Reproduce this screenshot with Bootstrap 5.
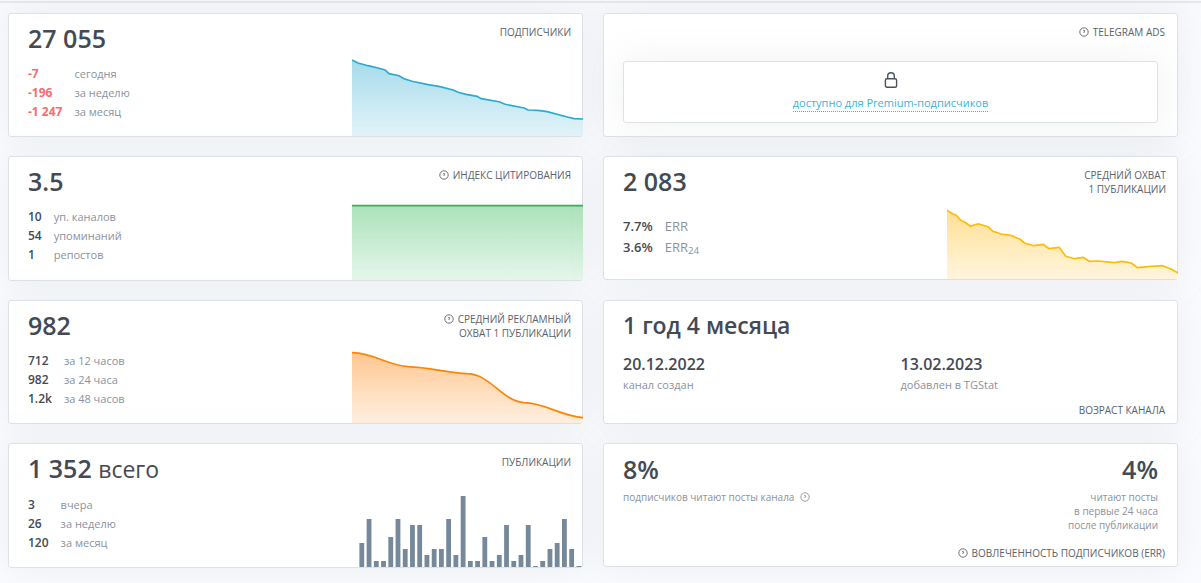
<!DOCTYPE html>
<html lang="ru">
<head>
<meta charset="utf-8">
<meta name="viewport" content="width=device-width, initial-scale=1">
<title>Статистика канала</title>
<link href="https://cdn.jsdelivr.net/npm/bootstrap@5.3.0/dist/css/bootstrap.min.css" rel="stylesheet">
<style>
body{background:#fafbfe;color:#8a929e;font-family:"Open Sans","Noto Sans",sans-serif;font-size:11px;line-height:19px;overflow-x:hidden}
.topline{height:3px;background:#e6e8e9;border-top:1px solid #f8f9fa;box-shadow:0 0 35px rgba(154,161,171,.3)}
.board{padding:10px 23px 15px 8px}
.board .row{--bs-gutter-x:20px;--bs-gutter-y:19px}
.stat{border:1px solid #dee2e6;border-radius:3px;box-shadow:0 0 35px rgba(154,161,171,.15);min-height:124px}
.stat-tall{min-height:125px}
.stat-main{padding:9px 19px 0}
.figure-lg{font-size:25px;line-height:30px;font-weight:600;color:#434a54;margin:0 0 11px}
.figure-words{font-size:23px;margin-bottom:13px}
.figure-err{margin-top:1px;margin-bottom:6px}
.figure-rest{font-size:23px;font-weight:400}
.stat-label{font-size:10px;line-height:14px;color:#5b626b;text-transform:uppercase;text-align:right;padding:11px 12px 0 0}
.stat-label-end{padding:0 12px 6px 0}
.numbers th{font-size:12px;font-weight:600;color:#434a54;padding:0 12px 0 0}
.numbers td{padding:0}
.numbers .down{color:#fb6b6b;font-weight:700}
.numbers-lg{font-size:13px;line-height:21px;margin-top:20px}
.numbers-lg th{font-size:13px}
.chart-col{flex:0 0 231px;flex-basis:calc(40% + 2px);margin-right:-1px}
.chart{display:block;width:100%;height:80px}
.chart .line{fill:none;stroke-width:1.7;vector-effect:non-scaling-stroke}
.help{width:10px;height:10px;vertical-align:-1px;margin-right:4px}
.lockbox{border:1px solid #dee2e6;border-radius:3px;box-shadow:0 0 35px rgba(154,161,171,.15);margin:22px 19px 0;height:62px;padding-top:9px}
.lock{width:14px;height:18px;display:block}
.premium{color:#39b5d8;border-bottom:1px dotted;text-decoration:none;line-height:16px;margin-top:6px}
.date{font-size:16px;line-height:22px;font-weight:600;color:#434a54}
.note{font-size:10px;line-height:14px}
.note .help{margin:0 0 0 3px}
</style>
</head>
<body>
<svg class="d-none" aria-hidden="true">
  <symbol id="help" viewBox="0 0 10 10"><circle cx="5" cy="5" r="4.2" fill="none" stroke="currentColor" stroke-width=".9"/><path d="M4 3.9Q5 3.1 5.8 3.9 5.9 4.5 5 5V6" fill="none" stroke="currentColor" stroke-width=".9"/></symbol>
</svg>
<div class="topline"></div>
<main class="board">
<div class="row align-items-start">
  <div class="col-6">
    <section class="card stat flex-row">
      <div class="stat-main flex-grow-1">
        <h2 class="figure-lg">27 055</h2>
        <table class="numbers">
          <tr><th class="down" scope="row">-7</th><td>сегодня</td></tr>
          <tr><th class="down" scope="row">-196</th><td>за неделю</td></tr>
          <tr><th class="down" scope="row">-1 247</th><td>за месяц</td></tr>
        </table>
      </div>
      <div class="chart-col d-flex flex-column justify-content-between">
        <div class="stat-label">Подписчики</div>
        <svg class="chart" viewBox="0 0 231 80" preserveAspectRatio="none">
          <defs><linearGradient id="gBlue" x2="0" y2="1"><stop stop-color="#a5dbea"/><stop offset="1" stop-color="#e3f4fa"/></linearGradient></defs>
          <path fill="url(#gBlue)" d="M0 4L6 7 16 9.7 26 12 33 14 37 17.7 47 19.7 52 22.7 60 25.3 76 28.7 88 30.7 101 34 106 36.3 114 38.3 125 40.3 129 42.7 147 45.7 153 48.3 172 52 176 54 186 54.3 195 55.7 215 61 222 62.7 231 63V80H0z"/>
          <path class="line" stroke="#2aabd2" d="M0 4L6 7 16 9.7 26 12 33 14 37 17.7 47 19.7 52 22.7 60 25.3 76 28.7 88 30.7 101 34 106 36.3 114 38.3 125 40.3 129 42.7 147 45.7 153 48.3 172 52 176 54 186 54.3 195 55.7 215 61 222 62.7 231 63"/>
        </svg>
      </div>
    </section>
  </div>
  <div class="col-6">
    <section class="card stat">
      <div class="stat-label"><svg class="help"><use href="#help"/></svg>Telegram Ads</div>
      <div class="lockbox d-flex flex-column align-items-center bg-white">
        <svg class="lock" viewBox="0 0 14 18" fill="none" stroke="#4b525b" stroke-width="1.4"><rect x="1.4" y="7.7" width="11.2" height="8.6" rx="1.5"/><path d="M3.7 7.7V5.1C3.7 2.9 5 1.7 7 1.7s3.3 1.2 3.3 3.4v2.6"/></svg>
        <a class="premium" href="#">доступно для Premium-подписчиков</a>
      </div>
    </section>
  </div>

  <div class="col-6">
    <section class="card stat stat-tall flex-row">
      <div class="stat-main flex-grow-1">
        <h2 class="figure-lg">3.5</h2>
        <table class="numbers">
          <tr><th scope="row">10</th><td>уп. каналов</td></tr>
          <tr><th scope="row">54</th><td>упоминаний</td></tr>
          <tr><th scope="row">1</th><td>репостов</td></tr>
        </table>
      </div>
      <div class="chart-col d-flex flex-column justify-content-between">
        <div class="stat-label"><svg class="help"><use href="#help"/></svg>Индекс цитирования</div>
        <svg class="chart" viewBox="0 0 231 80" preserveAspectRatio="none">
          <defs><linearGradient id="gGreen" x2="0" y2="1"><stop stop-color="#ace2ba"/><stop offset="1" stop-color="#e6f7eb"/></linearGradient></defs>
          <path fill="url(#gGreen)" d="M0 5.6H231V80H0z"/>
          <path class="line" stroke="#30b552" d="M0 5.6H231"/>
        </svg>
      </div>
    </section>
  </div>
  <div class="col-6">
    <section class="card stat flex-row">
      <div class="stat-main flex-grow-1">
        <h2 class="figure-lg">2 083</h2>
        <table class="numbers numbers-lg">
          <tr><th scope="row">7.7%</th><td>ERR</td></tr>
          <tr><th scope="row">3.6%</th><td>ERR<sub>24</sub></td></tr>
        </table>
      </div>
      <div class="chart-col d-flex flex-column justify-content-between">
        <div class="stat-label">Средний охват<br>1 публикации</div>
        <svg class="chart" viewBox="0 0 231 80" preserveAspectRatio="none">
          <defs><linearGradient id="gYellow" x2="0" y2="1"><stop stop-color="#ffdf94"/><stop offset="1" stop-color="#fff6de"/></linearGradient></defs>
          <path fill="url(#gYellow)" d="M0 11.3L5.3 14.7 9.3 16.3 13.7 21.3 18 23.3 23.7 27.3 31 24.7 41 27.7 46 32.3 54 35 65 36.7 68 38.3 72.7 40 78 44.3 87 46.7 96 45.3 102 49.7 112 48.3 118.7 57.3 127.3 59.7 136 58.3 142 62.3 151 62 167 63.7 175.3 62.3 184 64 190 68.7 203.7 67.3 215.3 66.7 223.7 70 231 74V80H0z"/>
          <path class="line" stroke="#ffbc00" stroke-linejoin="round" d="M0 11.3L5.3 14.7 9.3 16.3 13.7 21.3 18 23.3 23.7 27.3 31 24.7 41 27.7 46 32.3 54 35 65 36.7 68 38.3 72.7 40 78 44.3 87 46.7 96 45.3 102 49.7 112 48.3 118.7 57.3 127.3 59.7 136 58.3 142 62.3 151 62 167 63.7 175.3 62.3 184 64 190 68.7 203.7 67.3 215.3 66.7 223.7 70 231 74"/>
        </svg>
      </div>
    </section>
  </div>

  <div class="col-6">
    <section class="card stat flex-row">
      <div class="stat-main flex-grow-1">
        <h2 class="figure-lg">982</h2>
        <table class="numbers">
          <tr><th scope="row">712</th><td>за 12 часов</td></tr>
          <tr><th scope="row">982</th><td>за 24 часа</td></tr>
          <tr><th scope="row">1.2k</th><td>за 48 часов</td></tr>
        </table>
      </div>
      <div class="chart-col d-flex flex-column justify-content-between">
        <div class="stat-label"><svg class="help"><use href="#help"/></svg>Средний рекламный<br>охват 1 публикации</div>
        <svg class="chart" viewBox="0 0 231 80" preserveAspectRatio="none">
          <defs><linearGradient id="gOrange" x2="0" y2="1"><stop stop-color="#ffc791"/><stop offset="1" stop-color="#fff0e1"/></linearGradient></defs>
          <path fill="url(#gOrange)" d="M0 9.7C23 10.5 35 22 56 23.7C77 24.5 95 29.5 115 30.7C138 31 150 58 172 59.7C193 60 208 73 231 74.7V80H0z"/>
          <path class="line" stroke="#ff8400" d="M0 9.7C23 10.5 35 22 56 23.7C77 24.5 95 29.5 115 30.7C138 31 150 58 172 59.7C193 60 208 73 231 74.7"/>
        </svg>
      </div>
    </section>
  </div>
  <div class="col-6">
    <section class="card stat">
      <div class="stat-main">
        <h2 class="figure-lg figure-words">1 год 4 месяца</h2>
        <div class="row">
          <div class="col-6"><div class="date">20.12.2022</div>канал создан</div>
          <div class="col-6"><div class="date">13.02.2023</div>добавлен в TGStat</div>
        </div>
      </div>
      <div class="stat-label stat-label-end mt-auto">Возраст канала</div>
    </section>
  </div>

  <div class="col-6">
    <section class="card stat stat-tall flex-row">
      <div class="stat-main flex-grow-1">
        <h2 class="figure-lg">1 352 <span class="figure-rest">всего</span></h2>
        <table class="numbers">
          <tr><th scope="row">3</th><td>вчера</td></tr>
          <tr><th scope="row">26</th><td>за неделю</td></tr>
          <tr><th scope="row">120</th><td>за месяц</td></tr>
        </table>
      </div>
      <div class="chart-col d-flex flex-column justify-content-between">
        <div class="stat-label">Публикации</div>
        <svg class="chart" id="posts" viewBox="0 0 231 80" preserveAspectRatio="none" fill="#75899b"></svg>
      </div>
    </section>
  </div>
  <div class="col-6">
    <section class="card stat">
      <div class="stat-main d-flex justify-content-between">
        <div>
          <h2 class="figure-lg figure-err">8%</h2>
          <div class="note">подписчиков читают посты канала <svg class="help"><use href="#help"/></svg></div>
        </div>
        <div class="text-end">
          <h2 class="figure-lg figure-err">4%</h2>
          <div class="note">читают посты<br>в первые 24 часа<br>после публикации</div>
        </div>
      </div>
      <div class="stat-label stat-label-end mt-auto"><svg class="help"><use href="#help"/></svg>Вовлеченность подписчиков (ERR)</div>
    </section>
  </div>
</div>
</main>
<script src="https://cdn.jsdelivr.net/npm/bootstrap@5.3.0/dist/js/bootstrap.bundle.min.js"></script>
<script>
// daily posts: one bar per day, heights in chart units
const bars=[24,48,6,6,30,48,18,42,42,12,18,18,48,12,71,6,6,30,6,12,42,6,12,42,1,6,18,24,48,18,1];
document.getElementById('posts').innerHTML=bars.map((h,i)=>
  `<rect x="${(7.4+i*7.23).toFixed(2)}" y="${80-h}" width="4.8" height="${h}"/>`).join('');
</script>
</body>
</html>
